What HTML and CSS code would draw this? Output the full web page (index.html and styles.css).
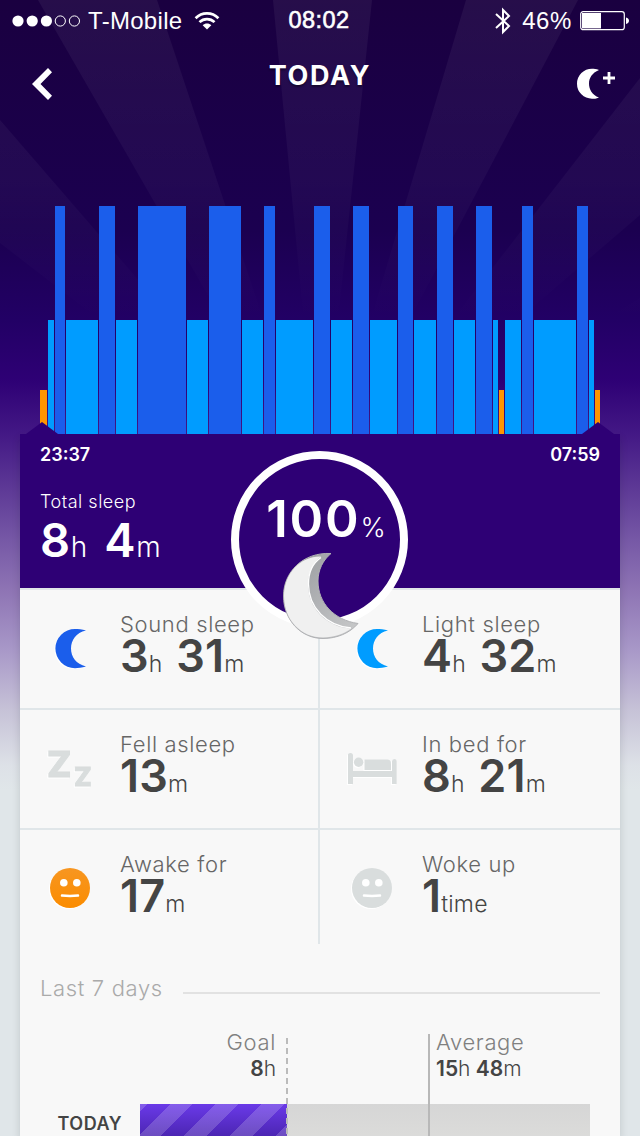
FILE: index.html
```html
<!DOCTYPE html>
<html lang="en">
<head>
    <meta charset="UTF-8">
    <title>Today</title>
    <link rel="stylesheet" href="styles.css">
</head>
<body>
    <svg class="rays" width="640" height="434" viewBox="0 0 640 434">
        <defs>
            <linearGradient id="rayFade" gradientUnits="userSpaceOnUse" x1="0" y1="0" x2="0" y2="400">
                <stop offset="0" stop-color="#fff" stop-opacity=".055"/>
                <stop offset=".45" stop-color="#fff" stop-opacity=".035"/>
                <stop offset=".8" stop-color="#fff" stop-opacity="0"/>
            </linearGradient>
        </defs>
        <g fill="url(#rayFade)">
            <path d="M38 0H157L320 490Z"/>
            <path d="M273 0H372L320 490Z"/>
            <path d="M466 0H578L320 490Z"/>
            <path d="M0 120V243L320 490Z"/>
            <path d="M640 78V215L320 490Z"/>
            <path d="M0 318V420L320 490Z"/>
            <path d="M640 298V420L320 490Z"/>
        </g>
    </svg>

    <div class="status-bar">
        <div class="carrier">
            <svg width="70" height="14" viewBox="0 0 70 14" fill="#fff">
                <circle cx="6" cy="7" r="5.6"/><circle cx="20.2" cy="7" r="5.6"/><circle cx="34.4" cy="7" r="5.6"/>
                <g fill="none" stroke="#fff"><circle cx="48.3" cy="7" r="5.1"/><circle cx="62.4" cy="7" r="5.1"/></g>
            </svg>
            <span class="carrier-name">T-Mobile</span>
            <svg width="26" height="20" viewBox="0 0 26 20" fill="none" stroke="#fff" stroke-width="2.7">
                <path d="M1.6 7.2C8 .7 18 .7 24.4 7.2"/>
                <path d="M5.5 11.1C9.7 7 16.3 7 20.5 11.1"/>
                <path d="M13 18.6L8.7 14.2C11 11.9 15 11.9 17.3 14.2Z" fill="#fff" stroke="none"/>
            </svg>
        </div>
        <div class="clock">08:02</div>
        <div class="power">
            <svg width="18" height="28" viewBox="0 0 18 28" fill="none" stroke="#fff" stroke-width="2">
                <path d="M2 7L15 19L9 25V3L15 9L2 21"/>
            </svg>
            <span class="percent">46%</span>
            <svg width="50" height="20" viewBox="0 0 50 20">
                <rect x=".7" y=".7" width="43.6" height="18" rx="2.5" fill="none" stroke="#fff" stroke-width="1.2"/>
                <rect x="2" y="2" width="19" height="15.4" fill="#fff"/>
                <path d="M46 6.5C50 7 50 12.5 46 13Z" fill="#fff"/>
            </svg>
        </div>
    </div>

    <div class="navbar">
        <svg class="back" width="20" height="32" viewBox="0 0 20 32">
            <path d="M16 0L20 4.2L8.5 16L20 27.8L16 32L0 16Z" fill="#fff"/>
        </svg>
        <h1 class="title">TODAY</h1>
        <svg class="add-sleep" width="40" height="32" viewBox="0 0 40 32">
            <path d="M22 2C19 .7 17 .7 15 .7A15 15 0 0 0 15 30.7C17 30.7 19 30.7 22 29.4C15 27 12 21 12 15.7C12 10 15 5 22 2Z" fill="#fff"/>
            <path d="M26 10H38M32 4V16" stroke="#fff" stroke-width="2.8"/>
        </svg>
    </div>

    <div class="chart">
        <i class="awake" style="width:7px"></i>
        <i class="light" style="width:6px"></i>
        <i class="sound" style="width:10px"></i>
        <i class="light" style="width:32px"></i>
        <i class="sound" style="width:16px"></i>
        <i class="light" style="width:21px"></i>
        <i class="sound" style="width:48px"></i>
        <i class="light" style="width:21px"></i>
        <i class="sound" style="width:32px"></i>
        <i class="light" style="width:21px"></i>
        <i class="sound" style="width:11px"></i>
        <i class="light" style="width:37px"></i>
        <i class="sound" style="width:16px"></i>
        <i class="light" style="width:21px"></i>
        <i class="sound" style="width:16px"></i>
        <i class="light" style="width:27px"></i>
        <i class="sound" style="width:15px"></i>
        <i class="light" style="width:22px"></i>
        <i class="sound" style="width:16px"></i>
        <i class="light" style="width:21px"></i>
        <i class="sound" style="width:16px"></i>
        <i class="light" style="width:5px"></i>
        <i class="awake" style="width:5px"></i>
        <i class="light" style="width:16px"></i>
        <i class="sound" style="width:11px"></i>
        <i class="light" style="width:42px"></i>
        <i class="sound" style="width:11px"></i>
        <i class="light" style="width:5px"></i>
        <i class="awake" style="width:5px"></i>
    </div>

    <div class="card">
        <div class="summary">
            <div class="times"><span>23:37</span><span>07:59</span></div>
            <div class="total-label">Total sleep</div>
            <div class="total-value">8<small>h</small> 4<small>m</small></div>
            <div class="score">
                <span class="score-value">100<small>%</small></span>
            </div>
            <svg class="score-moon" width="80" height="90" viewBox="281 551 80 90">
                <defs>
                    <linearGradient id="moonEdge" x1="0" y1="0" x2="1" y2="1">
                        <stop offset=".3" stop-color="#a5a7aa"/>
                        <stop offset="1" stop-color="#cacbcc"/>
                    </linearGradient>
                </defs>
                <path d="M331 553.5C303 552 283.500 572 283.500 596C283.500 620 301 638.500 323 638.500C337 638.500 350 633 358 623.500C334 620 318 603 318 581C318 570 323 560 331 553.500Z" fill="url(#moonEdge)" stroke="#b0b1b4"/>
                <path d="M321 556.500C301 556 284 573 284 596C284 620 301 637.500 323 637.500C334 637.500 344 634 351 628.500C326 627 308 608 308 584C308 573 313 563 321 556.500Z" fill="#f0f0f0"/>
                <path d="M321 557.500C313 563 308.500 573 308.500 584C308.500 608 327 626 351 628" fill="none" stroke="#fff" stroke-width="1.300"/>
            </svg>
        </div>

        <div class="stats">
            <div class="stat">
                <svg class="icon" width="60" height="60" viewBox="0 0 60 60">
                    <path d="M46 12.6C42 11.2 38 11 35 11A19.6 19.6 0 0 0 35 50.2C38 50.2 42 50 46 48.6C36 46 31 39 31 30.6C31 22 36 15 46 12.6Z" fill="#1b5eeb"/>
                </svg>
                <div class="info">
                    <div class="label">Sound sleep</div>
                    <div class="value">3<small>h</small> 31<small>m</small></div>
                </div>
            </div>
            <div class="stat">
                <svg class="icon" width="60" height="60" viewBox="0 0 60 60">
                    <path d="M46 12.6C42 11.2 38 11 35 11A19.6 19.6 0 0 0 35 50.2C38 50.2 42 50 46 48.6C36 46 31 39 31 30.6C31 22 36 15 46 12.6Z" fill="#009cff"/>
                </svg>
                <div class="info">
                    <div class="label">Light sleep</div>
                    <div class="value">4<small>h</small> 32<small>m</small></div>
                </div>
            </div>
            <div class="stat">
                <svg class="icon zz" width="60" height="60" viewBox="0 0 60 60">
                    <text x="7" y="39" font-size="36">Z</text>
                    <text x="34" y="47.5" font-size="26">Z</text>
                </svg>
                <div class="info">
                    <div class="label">Fell asleep</div>
                    <div class="value">13<small>m</small></div>
                </div>
            </div>
            <div class="stat">
                <svg class="icon" width="60" height="60" viewBox="0 0 60 60" fill="#d9dddd">
                    <path d="M6 16.5Q6 15 8.500 15Q11 15 11 17.500V33H50V23.500Q50 21 52.300 21Q54.600 21 54.600 23V46H50V39H11V46H6Z"/>
                    <circle cx="16.600" cy="24.200" r="4.700"/>
                    <path d="M22.500 21.500H45Q49 21.500 49 25.500V32H22.500Z"/>
                </svg>
                <div class="info">
                    <div class="label">In bed for</div>
                    <div class="value">8<small>h</small> 21<small>m</small></div>
                </div>
            </div>
            <div class="stat">
                <svg class="icon" width="60" height="60" viewBox="0 0 60 60">
                    <defs>
                        <linearGradient id="face" x1="0" y1="0" x2="0" y2="1">
                            <stop offset="0" stop-color="#f79621"/>
                            <stop offset="1" stop-color="#fb8c00"/>
                        </linearGradient>
                    </defs>
                    <circle cx="30" cy="30" r="20" fill="url(#face)"/>
                    <circle cx="23.8" cy="24.8" r="3.8" fill="#fff"/>
                    <circle cx="36.8" cy="24.8" r="3.8" fill="#fff"/>
                    <path d="M22 37.5Q30 38.3 38 37.5" fill="none" stroke="#fff" stroke-width="2.5" stroke-linecap="round"/>
                </svg>
                <div class="info">
                    <div class="label">Awake for</div>
                    <div class="value">17<small>m</small></div>
                </div>
            </div>
            <div class="stat">
                <svg class="icon" width="60" height="60" viewBox="0 0 60 60">
                    <circle cx="30" cy="30" r="20" fill="#d9dddd"/>
                    <circle cx="23.8" cy="24.8" r="3.8" fill="#fff"/>
                    <circle cx="36.8" cy="24.8" r="3.8" fill="#fff"/>
                    <path d="M22 37.5Q30 38.3 38 37.5" fill="none" stroke="#fff" stroke-width="2.5" stroke-linecap="round"/>
                </svg>
                <div class="info">
                    <div class="label">Woke up</div>
                    <div class="value">1<small>time</small></div>
                </div>
            </div>
        </div>

        <div class="week">
            <h2 class="week-title">Last 7 days</h2>
            <div class="week-chart">
                <div class="legend goal">
                    <div class="legend-label">Goal</div>
                    <div class="legend-value">8<small>h</small></div>
                </div>
                <div class="legend average">
                    <div class="legend-label">Average</div>
                    <div class="legend-value">15<small>h</small> 48<small>m</small></div>
                </div>
                <div class="day">TODAY</div>
                <div class="track"><div class="fill" style="width:147px"></div></div>
                <div class="goal-line"></div>
                <div class="average-line"></div>
            </div>
        </div>
    </div>
</body>
</html>
```
FILE: styles.css
```css
* {
    box-sizing: border-box;
}
body {
    position: relative;
    width: 640px;
    height: 1136px;
    margin: 0;
    overflow: hidden;
    font-family: Inter, sans-serif;
    background: linear-gradient(#1a0040 0, #1b0050 230px, #220065 320px, #2e0075 380px, #431885 434px, #7658a6 540px, #8e74b4 590px, #a898c8 650px, #c6c2d7 710px, #dde1e7 765px, #e0e6e9 790px);
}
small {
    font-weight: 300;
}
.rays {
    position: absolute;
    top: 0;
    left: 0;
    z-index: -1;
}

/* status bar */
.status-bar {
    display: grid;
    grid-template-columns: 1fr auto 1fr;
    align-items: center;
    height: 41px;
    padding: 0 11px 0 12px;
    color: #fff;
    font-family: "Liberation Sans", sans-serif;
    font-size: 24px;
    line-height: 41px;
}
.carrier, .power {
    display: flex;
    align-items: center;
}
.carrier-name {
    margin: 0 12px 0 6px;
    letter-spacing: .3px;
}
.clock {
    margin: 0 3px 0 0;
    font-size: 23.5px;
    letter-spacing: .4px;
    -webkit-text-stroke: .6px #fff;
}
.power {
    justify-content: flex-end;
    margin-right: -1px;
}
.percent {
    margin: 0 8px 0 10px;
    letter-spacing: .6px;
}

/* navigation */
.navbar {
    display: grid;
    grid-template-columns: 1fr auto 1fr;
    align-items: start;
    height: 165px;
    padding: 20px 23px 0;
}
.back {
    margin: 7px 0 0 9px;
}
.title {
    margin: 0;
    color: #fff;
    font-size: 27px;
    font-weight: 700;
    letter-spacing: 1.7px;
    line-height: 30px;
    text-shadow: 0 2px 2px rgba(0, 0, 0, .4);
}
.add-sleep {
    justify-self: end;
    margin-top: 7px;
}

/* sleep phases */
.chart {
    display: flex;
    align-items: flex-end;
    gap: 1px;
    height: 228px;
    margin: 0 40px;
}
.sound {
    height: 228px;
    background: #1b5eeb;
}
.light {
    height: 114px;
    background: #009cff;
}
.awake {
    height: 44px;
    background: #ff9500;
}

/* card */
.card {
    height: 702px;
    margin: 0 20px;
    background: #f8f8f8;
    box-shadow: 0 4px 8px rgba(0, 20, 20, .15);
}
.summary {
    position: relative;
    height: 154px;
    padding: 10px 20px 0;
    color: #fff;
    background: #2e0075;
}
.summary::before, .summary::after {
    content: "";
    position: absolute;
    top: -12px;
    width: 32px;
    height: 12px;
    background: #2e0075;
    clip-path: polygon(50% 0, 100% 100%, 0 100%);
}
.summary::before {
    left: 6px;
}
.summary::after {
    right: 6px;
}
.times {
    display: flex;
    justify-content: space-between;
    font-size: 18px;
    font-weight: 600;
    line-height: 22px;
}
.total-label {
    margin-top: 25px;
    font-size: 18px;
    font-weight: 300;
    letter-spacing: .5px;
    line-height: 22px;
}
.total-value {
    margin-top: 2px;
    font-size: 47px;
    font-weight: 600;
    letter-spacing: .6px;
    line-height: 50px;
    word-spacing: 4px;
}
.total-value small {
    font-size: 28px;
}
.score {
    position: absolute;
    top: 17px;
    left: 211px;
    width: 177px;
    height: 177px;
    padding: 29px 0 0 13px;
    border: 8px solid #fff;
    border-radius: 50%;
    background: #2e0075;
    text-align: center;
    white-space: nowrap;
}
.score-value {
    font-size: 51px;
    font-weight: 600;
    letter-spacing: 1.8px;
    line-height: 62px;
}
.score-value small {
    font-size: 27px;
    letter-spacing: 0;
}
.score-moon {
    position: absolute;
    top: 117px;
    left: 261px;
}

/* stats */
.stats {
    display: grid;
    grid-template-columns: 300px 300px;
    grid-template-rows: 120px 120px 116px;
}
.stat {
    display: flex;
    border-top: 2px solid #e0e6e9;
}
.stat:nth-child(odd) {
    border-right: 2px solid #e0e6e9;
}
.icon {
    margin: 28px 20px 0;
    filter: drop-shadow(-1px 1px 0 #fff);
}
.stat:nth-child(even) .icon {
    margin: 28px 20px 0 22px;
}
.zz {
    fill: #d9dddd;
    stroke: #d9dddd;
    stroke-width: 1px;
    font-weight: 800;
}
.info {
    padding-top: 21px;
}
.label {
    color: #666;
    font-size: 22px;
    font-weight: 300;
    letter-spacing: .65px;
    line-height: 26px;
}
.value {
    height: 38px;
    color: #444;
    font-size: 45px;
    font-weight: 600;
    letter-spacing: .2px;
    line-height: 38px;
    word-spacing: 2px;
}
.value small {
    font-size: 23px;
    font-weight: 300;
}

/* last 7 days */
.week-title {
    display: flex;
    align-items: center;
    gap: 20px;
    margin: 31px 20px 0;
    color: #aaa;
    font-size: 22px;
    font-weight: 300;
    letter-spacing: .65px;
    line-height: 26px;
}
.week-title::after {
    content: "";
    flex: 1;
    height: 2px;
    margin-top: 10px;
    background: #e2e2e2;
}
.week-chart {
    position: relative;
    display: grid;
    grid-template-columns: 120px 147px 303px;
    grid-template-rows: 75px 60px;
    margin-top: 28px;
}
.legend {
    color: #444;
}
.goal {
    grid-column: 1 / 3;
    padding-right: 11px;
    text-align: right;
}
.average {
    padding-left: 149px;
}
.legend-label {
    color: #808080;
    font-size: 22px;
    font-weight: 300;
    letter-spacing: .65px;
    line-height: 26px;
}
.legend-value {
    margin-top: 1px;
    font-size: 21px;
    font-weight: 600;
    line-height: 26px;
}
.legend-value small {
    font-size: 21px;
}
.day {
    padding: 9px 18px 0 0;
    color: #444;
    font-size: 18px;
    font-weight: 600;
    letter-spacing: .5px;
    line-height: 22px;
    text-align: right;
}
.track {
    grid-column: 2 / 4;
    background: linear-gradient(#d6d6d6, #e0e0dd);
}
.fill {
    height: 100%;
    background: repeating-linear-gradient(135deg, rgba(255, 255, 255, .18) 0 5px, transparent 5px 21.4px, rgba(255, 255, 255, .18) 21.4px 32.3px), linear-gradient(#6a3ae8, #4a24b0 34px);
}
.goal-line, .average-line {
    position: absolute;
    width: 2px;
    bottom: 0;
}
.goal-line {
    top: 9px;
    left: 266px;
    background: repeating-linear-gradient(#bbb 0 6.5px, transparent 6.5px 10px);
}
.average-line {
    top: 5px;
    left: 408px;
    background: #b8b8b8;
}
```
